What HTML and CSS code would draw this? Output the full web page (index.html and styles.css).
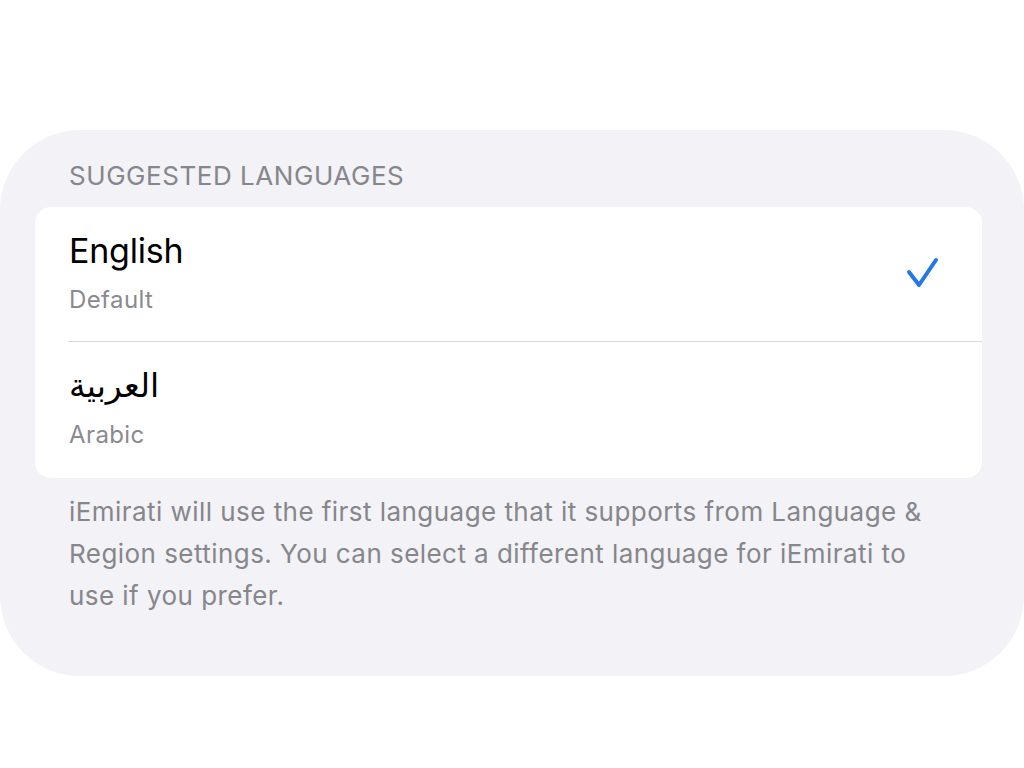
FILE: index.html
```html
<!DOCTYPE html>
<html lang="en">
<head>
<meta charset="utf-8">
<title>Suggested Languages</title>
<link rel="stylesheet" href="styles.css">
</head>
<body>
<section class="panel">
  <h2 class="section-header">SUGGESTED LANGUAGES</h2>
  <div class="card">
    <div class="row">
      <div class="row-text">
        <div class="row-title">English</div>
        <div class="row-sub">Default</div>
      </div>
      <svg class="check" width="34" height="34" viewBox="0 0 34 34" aria-hidden="true">
        <polyline points="4,15 14,28 31,3" fill="none" stroke="#2178e6" stroke-width="4" stroke-linecap="round" stroke-linejoin="round"/>
      </svg>
    </div>
    <div class="separator"></div>
    <div class="row row-last">
      <div class="row-text">
        <div class="row-title arabic" lang="ar" dir="rtl">العربية</div>
        <div class="row-sub">Arabic</div>
      </div>
    </div>
  </div>
  <p class="footer">iEmirati will use the first language that it supports from Language &amp; Region settings. You can select a different language for iEmirati to use if you prefer.</p>
</section>
</body>
</html>
```

FILE: styles.css
```css
html, body {
  margin: 0;
  padding: 0;
  background: #ffffff;
}
body {
  font-family: "Inter", "Liberation Sans", "DejaVu Sans", sans-serif;
  width: 1024px;
  height: 768px;
  overflow: hidden;
}
.panel {
  margin-top: 130px;
  height: 546px;
  box-sizing: border-box;
  background: #f2f2f7;
  border-radius: 80px;
  padding: 31px 42px 0 35px;
}
.section-header {
  margin: 0 0 16px;
  padding-left: 34px;
  font-size: 26px;
  font-weight: 400;
  line-height: 30px;
  color: #86868b;
  letter-spacing: 0.55px;
}
.card {
  background: #ffffff;
  border-radius: 16px;
  overflow: hidden;
}
.row {
  display: flex;
  align-items: flex-start;
  justify-content: space-between;
  height: 134px;
  box-sizing: border-box;
  padding: 24px 43px 0 34px;
}
.row-last {
  height: 136px;
}
.row-text {
  display: flex;
  flex-direction: column;
  align-items: flex-start;
}
.row-title {
  font-size: 34px;
  line-height: 40px;
  color: #000000;
  letter-spacing: -0.2px;
}
.arabic {
  font-family: "DejaVu Sans", "Noto Sans", sans-serif;
  font-size: 33px;
  letter-spacing: 0;
}
.row-sub {
  margin-top: 15px;
  font-size: 24px;
  line-height: 28px;
  color: #8a8a8e;
  letter-spacing: 0.4px;
}
.check {
  display: block;
  margin-top: 26px;
}
.separator {
  height: 1px;
  background: #d8d8dc;
  margin-left: 33px;
}
.footer {
  margin: 13px 0 0;
  padding-left: 34px;
  width: 870px;
  font-size: 26px;
  line-height: 42px;
  color: #86868b;
  letter-spacing: 0.45px;
}
```
